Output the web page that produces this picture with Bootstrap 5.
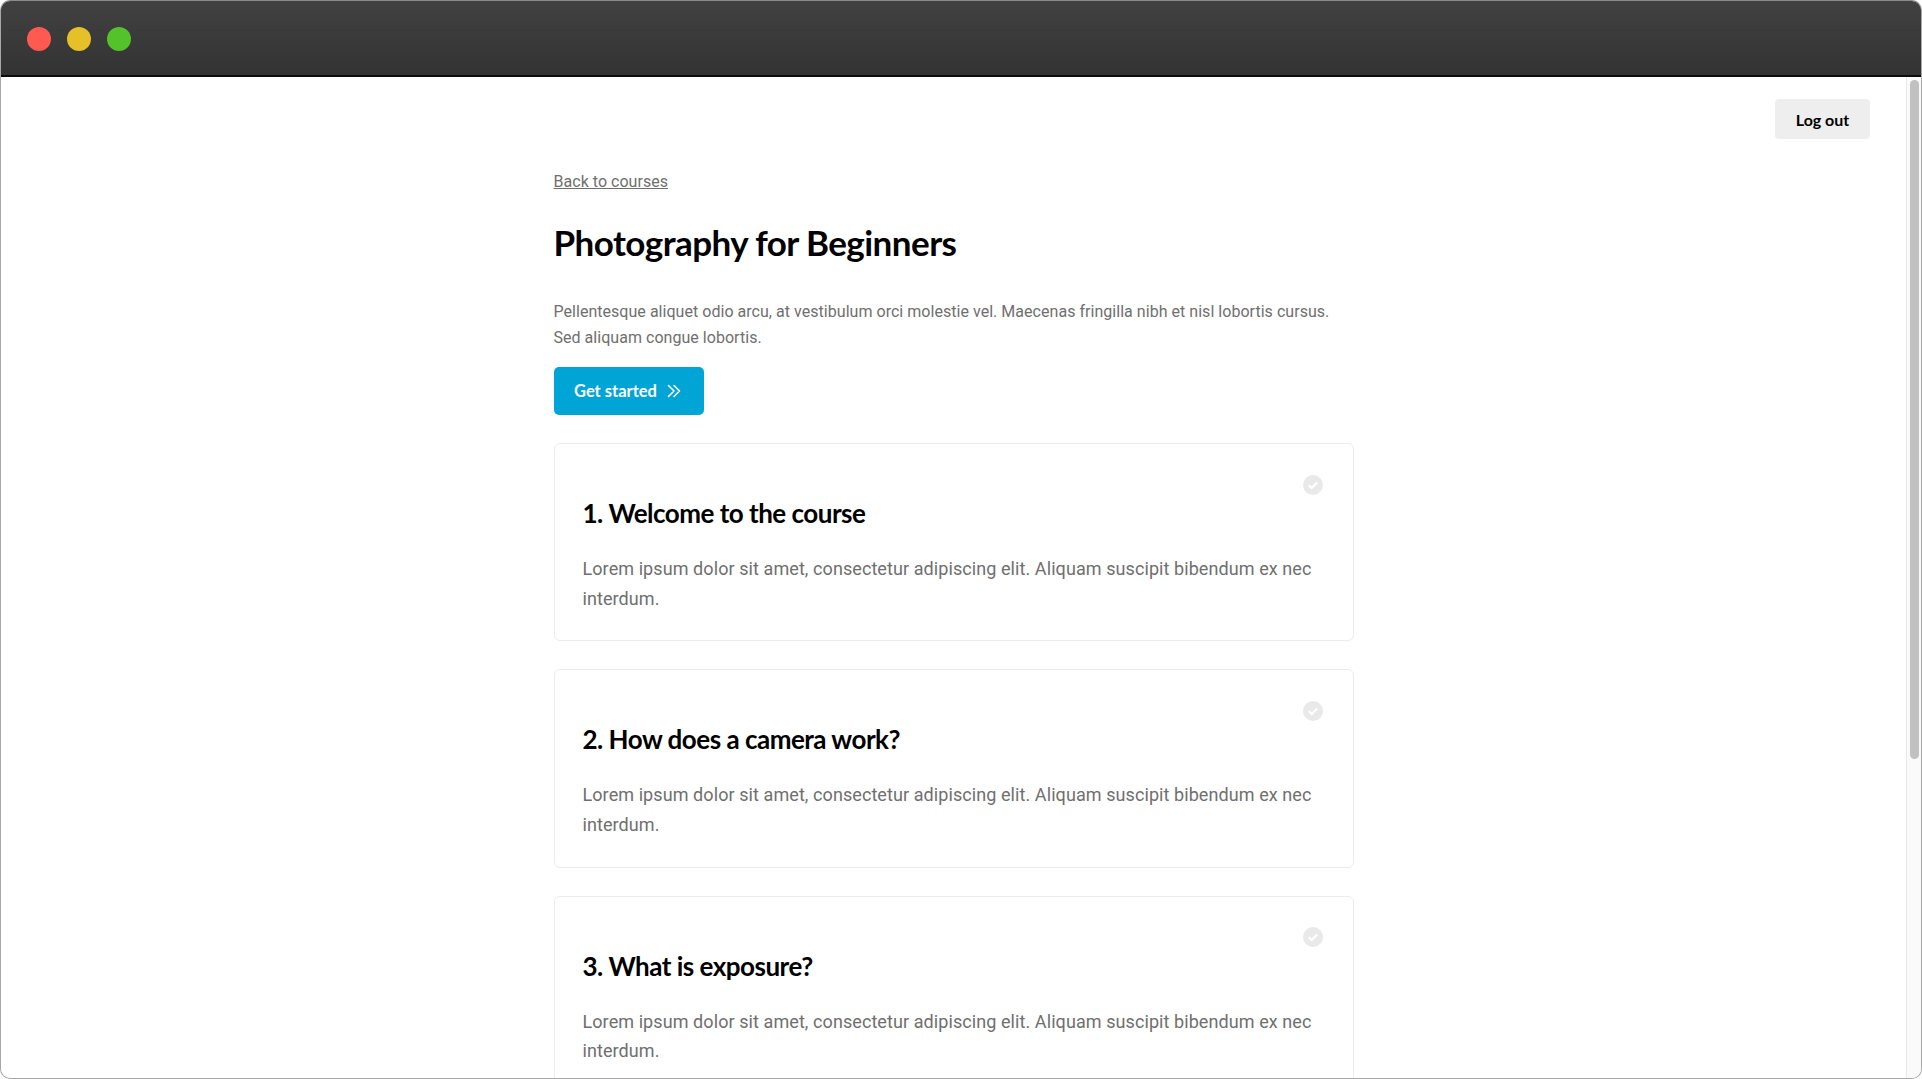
<!DOCTYPE html>
<html lang="en">
  <head>
    <meta charset="UTF-8" />
    <meta name="viewport" content="width=device-width, initial-scale=1.0" />
    <title>Photography for Beginners</title>
    <link href="https://cdn.jsdelivr.net/npm/bootstrap@5.3.3/dist/css/bootstrap.min.css" rel="stylesheet" />
    <style>
      html, body { height: 100%; overflow: hidden; background: #fff; }
      .app-window {
        height: 1079px;
        border: 1px solid #a8a8a8;
        border-top-color: #8a8a8a;
        border-radius: 10px;
        overflow: hidden;
        font-family: Roboto, sans-serif;
      }
      .title-bar {
        height: 76px;
        flex: none;
        padding: 2px 0 0 26px;
        gap: 16px;
        background: linear-gradient(#414141, #333);
        border-bottom: 2px solid #0c0c0c;
      }
      .traffic-dot { width: 24px; height: 24px; border-radius: 50%; }
      .dot-red { background: #ff5a52; }
      .dot-yellow { background: #e6c029; }
      .dot-green { background: #53c22b; }
      .page-body { min-height: 0; }
      .page-scroll { min-width: 0; overflow: hidden; }
      .top-actions { padding: 22px 36px 0 0; height: 63px; }
      .btn-logout {
        width: 95px;
        height: 40px;
        padding: 0;
        background: #eee;
        border: 0;
        border-radius: 4px;
        color: #000;
        font: 700 16px Lato, sans-serif;
      }
      .course-column { width: 800px; margin-left: 552.5px; padding-top: 30px; }
      .back-link { color: #6f6f6f; font-size: 16px; line-height: 24px; letter-spacing: .03px; }
      .course-title { font: 700 35px/44px Lato, sans-serif; letter-spacing: -.55px; color: #000; margin: 26px 0 35px; }
      .course-intro { color: #6f6f6f; font-size: 16px; line-height: 26px; margin-bottom: 16px; letter-spacing: .035px; }
      .btn-start {
        width: 150px;
        height: 48px;
        padding: 0 0 0 20.5px;
        background: #00a5d6;
        border: 0;
        border-radius: 5px;
        color: #fff;
        font: 700 16.5px Lato, sans-serif;
        gap: 10.5px;
      }
      .btn-start:hover { background: #00a5d6; color: #fff; }
      .lesson-list { margin-top: 28px; gap: 28px; }
      .lesson-card {
        height: 198.4px;
        flex: none;
        border: 1px solid #ececec;
        border-radius: 6px;
        padding: 0 28px;
      }
      .lesson-check { position: absolute; top: 30.5px; right: 30px; width: 20px; height: 20px; }
      .lesson-title { font: 700 26px/32px Lato, sans-serif; letter-spacing: -.5px; color: #000; margin: 53px 0 25px; }
      .lesson-text { color: #6f6f6f; font-size: 18px; line-height: 29.5px; margin: 0; letter-spacing: .08px; }
      .scroll-track {
        width: 15px;
        flex: none;
        background: #fafafa;
        border-left: 1px solid #e8e8e8;
        padding: 3px 2px 0 3px;
      }
      .scroll-thumb { height: 679px; background: #c1c1c1; border-radius: 5px; }
    </style>
  </head>
  <body>
    <div class="app-window d-flex flex-column">
      <div class="title-bar d-flex align-items-center">
        <span class="traffic-dot dot-red"></span>
        <span class="traffic-dot dot-yellow"></span>
        <span class="traffic-dot dot-green"></span>
      </div>

      <div class="page-body d-flex flex-grow-1">
        <div class="page-scroll flex-grow-1">
          <div class="top-actions d-flex justify-content-end">
            <button type="button" class="btn btn-logout">Log out</button>
          </div>

          <div class="course-column">
            <a href="#" class="back-link d-inline-block">Back to courses</a>
            <h1 class="course-title">Photography for Beginners</h1>
            <p class="course-intro">
              Pellentesque aliquet odio arcu, at vestibulum orci molestie vel. Maecenas fringilla nibh et nisl lobortis cursus.
              Sed aliquam congue lobortis.
            </p>
            <button type="button" class="btn btn-start d-inline-flex align-items-center">
              Get started
              <svg width="14" height="14" viewBox="0 0 14 14" fill="none" stroke="#fff" stroke-width="1.6" stroke-linecap="round" stroke-linejoin="round">
                <path d="M1.5 1.5 7 7l-5.5 5.5M7 1.5 12.5 7 7 12.5" />
              </svg>
            </button>

            <div class="lesson-list d-flex flex-column">
              <div class="lesson-card position-relative">
                <svg class="lesson-check" viewBox="0 0 20 20">
                  <circle cx="10" cy="10" r="10" fill="#e9e9e9" />
                  <path d="M5.8 10.2 8.7 13l5.5-5.6" fill="none" stroke="#fff" stroke-width="2.2" />
                </svg>
                <h2 class="lesson-title">1. Welcome to the course</h2>
                <p class="lesson-text">Lorem ipsum dolor sit amet, consectetur adipiscing elit. Aliquam suscipit bibendum ex nec interdum.</p>
              </div>
              <div class="lesson-card position-relative">
                <svg class="lesson-check" viewBox="0 0 20 20">
                  <circle cx="10" cy="10" r="10" fill="#e9e9e9" />
                  <path d="M5.8 10.2 8.7 13l5.5-5.6" fill="none" stroke="#fff" stroke-width="2.2" />
                </svg>
                <h2 class="lesson-title">2. How does a camera work?</h2>
                <p class="lesson-text">Lorem ipsum dolor sit amet, consectetur adipiscing elit. Aliquam suscipit bibendum ex nec interdum.</p>
              </div>
              <div class="lesson-card position-relative">
                <svg class="lesson-check" viewBox="0 0 20 20">
                  <circle cx="10" cy="10" r="10" fill="#e9e9e9" />
                  <path d="M5.8 10.2 8.7 13l5.5-5.6" fill="none" stroke="#fff" stroke-width="2.2" />
                </svg>
                <h2 class="lesson-title">3. What is exposure?</h2>
                <p class="lesson-text">Lorem ipsum dolor sit amet, consectetur adipiscing elit. Aliquam suscipit bibendum ex nec interdum.</p>
              </div>
            </div>
          </div>
        </div>

        <div class="scroll-track">
          <div class="scroll-thumb"></div>
        </div>
      </div>
    </div>

    <script src="https://cdn.jsdelivr.net/npm/bootstrap@5.3.3/dist/js/bootstrap.bundle.min.js"></script>
  </body>
</html>
